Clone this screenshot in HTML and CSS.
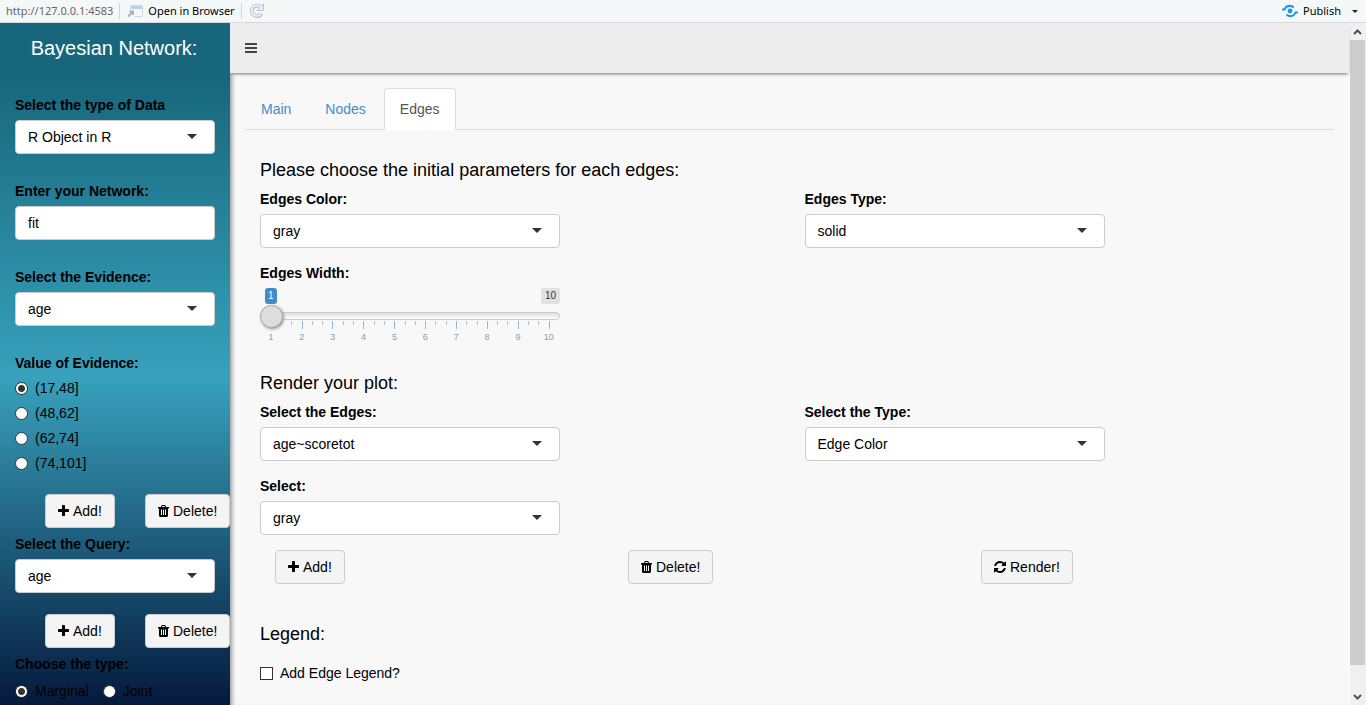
FILE: index.html
```html
<!DOCTYPE html>
<html lang="en">
<head>
<meta charset="utf-8">
<title>Bayesian Network</title>
<link rel="stylesheet" href="styles.css">
</head>
<body>
<svg class="sprite" aria-hidden="true">
  <symbol id="i-plus" viewBox="192 0 1408 1792"><path d="M1600 736v192q0 40-28 68t-68 28h-416v416q0 40-28 68t-68 28h-192q-40 0-68-28t-28-68v-416h-416q-40 0-68-28t-28-68v-192q0-40 28-68t68-28h416v-416q0-40 28-68t68-28h192q40 0 68 28t28 68v416h416q40 0 68 28t28 68z"/></symbol>
  <symbol id="i-trash" viewBox="0 0 11 14"><path fill-rule="evenodd" d="M3 3 3.500 1.500Q3.700 1 4.200 1H6.800Q7.300 1 7.500 1.500L8 3H11V4.500H10V11.600Q10 13 8.800 13H2.200Q1 13 1 11.600V4.500H0V3ZM4.100 3H6.900L6.600 2H4.400ZM3 5.500V11H4V5.500ZM5 5.500V11H6V5.500ZM7 5.500V11H8V5.500Z"/></symbol>
  <symbol id="i-refresh" viewBox="128 0 1536 1792"><path d="M1639 1056q0 5-1 7-64 268-268 434.500t-478 166.500q-146 0-282.500-55t-243.500-157l-129 129q-19 19-45 19t-45-19-19-45v-448q0-26 19-45t45-19h448q26 0 45 19t19 45-19 45l-137 137q71 66 161 102t187 36q134 0 250-65t186-179q11-17 53-117 8-23 30-23h192q13 0 22.500 9.500t9.500 22.500zm25-800v448q0 26-19 45t-45 19h-448q-26 0-45-19t-19-45 19-45l138-138q-148-137-349-137-134 0-250 65t-186 179q-11 17-53 117-8 23-30 23h-199q-13 0-22.500-9.500t-9.500-22.500v-7q65-268 270-434.500t480-166.500q146 0 284 55.500t245 156.500l130-129q19-19 45-19t45 19 19 45z"/></symbol>
</svg>

<div class="toolbar">
  <span class="url">http://127.0.0.1:4583</span>
  <span class="divider"></span>
  <button class="tool open" type="button">
    <svg width="16" height="14" viewBox="0 0 16 14" fill="none"><rect x="3.500" y="1.500" width="12" height="11" rx="1" fill="#f4f9fb" stroke="#c9d6df"/><path d="M4 2h11v3H4z" fill="#b9d7ec"/><path d="M0 6h8v8H0z" fill="#f4f8f9"/><path d="M1 12.500 5 8.500M2.500 7.500h3.500v3.500" stroke="#a9b2bb" stroke-width="2"/></svg>
    Open in Browser
  </button>
  <span class="divider"></span>
  <button class="tool reload" type="button" aria-label="Reload">
    <svg width="16" height="16" viewBox="0 0 16 16" fill="none"><path d="M12.500 10.500A5.200 5.200 0 1 1 11.500 4" stroke="#b9c4d2" stroke-width="4"/><path d="M14.500 1v6.500H8z" fill="#e9eff8" stroke="#b9c4d2"/><path d="M12.300 10.500A5.200 5.200 0 1 1 11.800 4.300" stroke="#e9eff8" stroke-width="2"/></svg>
  </button>
  <button class="tool publish" type="button">
    <svg width="16" height="14" viewBox="0 0 16 14" fill="none" stroke="#1a9be6" stroke-width="2"><circle cx="8" cy="7" r="2.400" fill="#1a9be6" stroke="none"/><path d="M0 5.500h2.500C3.500 3 6 1.500 9 2q1.500.3 2.700 1.400M16 8.500h-2.500C12.500 11 10 12.500 7 12q-1.500-.3-2.700-1.400"/></svg>
    Publish
    <span class="caret"></span>
  </button>
</div>

<div class="app">
  <aside class="sidebar">
    <h1 class="brand">Bayesian Network:</h1>
    <form class="side-form">
      <div class="field spaced">
        <label for="dtype">Select the type of Data</label>
        <span class="select"><select id="dtype"><option>R Object in R</option></select></span>
      </div>
      <div class="field spaced">
        <label for="net">Enter your Network:</label>
        <input class="text" id="net" type="text" value="fit">
      </div>
      <div class="field spaced">
        <label for="evidence">Select the Evidence:</label>
        <span class="select"><select id="evidence"><option>age</option></select></span>
      </div>
      <fieldset class="radios">
        <legend>Value of Evidence:</legend>
        <label class="choice"><input type="radio" name="value" checked>(17,48]</label>
        <label class="choice"><input type="radio" name="value">(48,62]</label>
        <label class="choice"><input type="radio" name="value">(62,74]</label>
        <label class="choice"><input type="radio" name="value">(74,101]</label>
      </fieldset>
      <div class="side-actions">
        <div><button class="btn" type="button"><svg class="ico"><use href="#i-plus"/></svg>Add!</button></div>
        <div><button class="btn" type="button"><svg class="ico"><use href="#i-trash"/></svg>Delete!</button></div>
      </div>
      <div class="field">
        <label for="query">Select the Query:</label>
        <span class="select"><select id="query"><option>age</option></select></span>
      </div>
      <div class="side-actions">
        <div><button class="btn" type="button"><svg class="ico"><use href="#i-plus"/></svg>Add!</button></div>
        <div><button class="btn" type="button"><svg class="ico"><use href="#i-trash"/></svg>Delete!</button></div>
      </div>
      <fieldset class="radios inline">
        <legend>Choose the type:</legend>
        <label class="choice"><input type="radio" name="type" checked>Marginal</label>
        <label class="choice"><input type="radio" name="type">Joint</label>
      </fieldset>
    </form>
  </aside>

  <div class="main">
    <header class="navbar">
      <button class="menu" type="button" aria-label="Toggle navigation"><span></span><span></span><span></span></button>
    </header>
    <main class="content">
      <nav class="tabs">
        <a href="#main">Main</a>
        <a href="#nodes">Nodes</a>
        <a href="#edges" class="active">Edges</a>
      </nav>

      <h4 class="first">Please choose the initial parameters for each edges:</h4>
      <div class="row">
        <div class="col">
          <div class="field">
            <label for="ecolor">Edges Color:</label>
            <span class="select"><select id="ecolor"><option>gray</option></select></span>
          </div>
          <div class="slider">
            <label for="ewidth">Edges Width:</label>
            <div class="bounds"><span class="current">1</span><span class="max">10</span></div>
            <input id="ewidth" type="range" min="1" max="10" value="1">
            <svg class="ticks" viewBox="0 0 300 9" aria-hidden="true">
              <path class="minor" d="M21.500 0v4M31.500 0v4M52.500 0v4M62.500 0v4M83.500 0v4M93.500 0v4M114.500 0v4M124.500 0v4M145.500 0v4M155.500 0v4M175.500 0v4M186.500 0v4M206.500 0v4M217.500 0v4M237.500 0v4M247.500 0v4M268.500 0v4M278.500 0v4"/>
              <path class="major" d="M11.500 0v8M42.500 0v8M72.500 0v8M103.500 0v8M134.500 0v8M165.500 0v8M196.500 0v8M227.500 0v8M258.500 0v8M289.500 0v8"/>
            </svg>
            <div class="scale"><span>1</span><span>2</span><span>3</span><span>4</span><span>5</span><span>6</span><span>7</span><span>8</span><span>9</span><span>10</span></div>
          </div>
        </div>
        <div class="col">
          <div class="field">
            <label for="etype">Edges Type:</label>
            <span class="select"><select id="etype"><option>solid</option></select></span>
          </div>
        </div>
      </div>

      <h4 class="render">Render your plot:</h4>
      <div class="row">
        <div class="col">
          <div class="field">
            <label for="edges-sel">Select the Edges:</label>
            <span class="select"><select id="edges-sel"><option>age~scoretot</option></select></span>
          </div>
          <div class="field">
            <label for="val">Select:</label>
            <span class="select"><select id="val"><option>gray</option></select></span>
          </div>
        </div>
        <div class="col">
          <div class="field">
            <label for="tsel">Select the Type:</label>
            <span class="select"><select id="tsel"><option>Edge Color</option></select></span>
          </div>
        </div>
      </div>
      <div class="actions">
        <div><button class="btn" type="button"><svg class="ico"><use href="#i-plus"/></svg>Add!</button></div>
        <div><button class="btn" type="button"><svg class="ico"><use href="#i-trash"/></svg>Delete!</button></div>
        <div><button class="btn" type="button"><svg class="ico wide"><use href="#i-refresh"/></svg>Render!</button></div>
      </div>

      <h4 class="legend">Legend:</h4>
      <label class="choice check"><input type="checkbox">Add Edge Legend?</label>
    </main>
  </div>

  <div class="scrollbar" aria-hidden="true">
    <svg width="9" height="6" viewBox="0 0 9 6"><path d="M1 5 4.500 1.500 8 5" fill="none" stroke="#505050" stroke-width="2"/></svg>
    <span class="thumb"></span>
    <svg width="9" height="6" viewBox="0 0 9 6"><path d="M1 1 4.500 4.500 8 1" fill="none" stroke="#505050" stroke-width="2"/></svg>
  </div>
</div>
</body>
</html>
```
FILE: styles.css
```css
* { box-sizing: border-box; }

body {
  margin: 0;
  min-height: 100vh;
  display: flex;
  flex-direction: column;
  font: 14px/20px "Liberation Sans", Arial, sans-serif;
  color: #000;
  background: #f8f8f8;
}

button, input, select { font: inherit; color: inherit; margin: 0; }
.sprite { display: none; }

/* Viewer toolbar */
.toolbar {
  display: flex;
  align-items: center;
  height: 23px;
  padding: 0 8px 0 6px;
  background: #f4f8f9;
  border-bottom: 1px solid #d6dadc;
  font: 11px/20px "Noto Sans", sans-serif;
}
.url { color: #666; }
.divider { width: 1px; height: 16px; margin: 0 7px 0 6px; background: #cfd4d8; }
.tool {
  display: flex;
  align-items: center;
  gap: 5px;
  padding: 0;
  border: 0;
  background: none;
}
.publish { margin-left: auto; }
.caret {
  margin-left: 6px;
  border: 3px solid transparent;
  border-top-color: #222;
  border-bottom: 0;
}

.app { flex: 1; display: flex; }

/* Sidebar */
.sidebar {
  flex: 0 0 230px;
  min-width: 0;
  position: relative;
  z-index: 1;
  background: linear-gradient(#17667b 0, #17667b 50px, #38a1bc 52%, #041a3d 100%);
}
.brand {
  margin: 0;
  padding-right: 2px;
  font-size: 20px;
  font-weight: 400;
  line-height: 50px;
  text-align: center;
  color: #fff;
}
.side-form { padding: 22px 15px 0; }
.spaced { margin-bottom: 27px; }

.field { display: flex; flex-direction: column; gap: 5px; }
.field > label, .radios legend, .slider > label { font-weight: 700; }

.select { position: relative; display: block; }
.select::after {
  content: "";
  position: absolute;
  right: 18px;
  top: 14px;
  border: 5px solid transparent;
  border-top-color: #333;
  border-bottom: 0;
  pointer-events: none;
}
.select select, .text {
  appearance: none;
  display: block;
  width: 100%;
  height: 34px;
  padding: 0 12px;
  border: 1px solid #ccc;
  border-radius: 4px;
  background: #fff;
}

.radios {
  display: flex;
  flex-direction: column;
  gap: 5px;
  margin: 0;
  padding: 0;
  border: 0;
}
.radios legend { padding: 0; margin-bottom: 5px; }
.inline { flex-direction: row; gap: 14px; }
.inline legend { margin-bottom: 7px; }

.choice { display: flex; align-items: center; gap: 7px; }
.choice input {
  appearance: none;
  width: 13px;
  height: 13px;
  border: 1px solid #333;
  background: #fff;
}
.choice input[type="radio"] { border-radius: 50%; }
.choice input[type="radio"]:checked { background: radial-gradient(#333 3px, #fff 4px); }

.side-actions { display: flex; margin: 21px 0 6px 15px; }
.side-actions div { flex: 0 0 100px; min-width: 0; padding-left: 15px; }

.btn {
  display: inline-flex;
  align-items: center;
  gap: 4px;
  height: 34px;
  padding: 0 12px;
  border: 1px solid #ccc;
  border-radius: 4px;
  background: #f4f4f4;
  white-space: nowrap;
}
.ico { width: 11px; height: 14px; }
.ico.wide { width: 12px; }

/* Main area */
.main { flex: 1; display: flex; flex-direction: column; min-width: 0; }
.navbar {
  position: relative;
  display: flex;
  align-items: center;
  height: 50px;
  padding-left: 15px;
  background: #ededed;
  box-shadow: 0 2px 3px -1px #777;
}
.menu {
  display: flex;
  flex-direction: column;
  gap: 2px;
  width: 12px;
  padding: 0;
  border: 0;
  background: none;
}
.menu span { height: 2px; background: #444; }

.content {
  flex: 1;
  padding: 15px 15px 20px;
  box-shadow: inset 5px 0 4px -3px #999;
}
.tabs { display: flex; gap: 2px; border-bottom: 1px solid #ddd; }
.tabs a {
  margin-bottom: -1px;
  padding: 10px 15px;
  border: 1px solid transparent;
  border-radius: 4px 4px 0 0;
  color: #428bca;
  text-decoration: none;
}
.tabs .active {
  background: #fff;
  border-color: #ddd;
  border-bottom-color: #fff;
  color: #555;
}

h4 { margin: 0 15px 9px; font-size: 18px; font-weight: 400; line-height: 20px; }
.first { margin-top: 30px; }
.render { margin-top: 28px; }
.legend { margin-top: 40px; margin-bottom: 19px; }

.row { display: grid; grid-template-columns: 1fr 1fr; }
.col {
  display: flex;
  flex-direction: column;
  gap: 15px;
  align-items: flex-start;
  padding: 0 15px;
}
.col .field, .slider { width: 300px; max-width: 100%; }

.slider label, .slider input, .ticks { display: block; }
.bounds {
  display: flex;
  justify-content: space-between;
  margin: 5px 0 0 5px;
  font-size: 10px;
  line-height: 16px;
}
.bounds span { padding: 0 4px; border-radius: 3px; background: #e1e1e1; color: #333; }
.bounds .current { padding: 0 3px; background: #428bca; color: #fff; }
.slider input {
  appearance: none;
  position: relative;
  width: 100%;
  height: 24px;
  margin-bottom: -7px;
  background: none;
}
.slider input::-webkit-slider-runnable-track {
  height: 8px;
  border: 1px solid #ccc;
  border-radius: 8px;
  background: linear-gradient(#ddd, #fff);
}
.slider input::-webkit-slider-thumb {
  appearance: none;
  position: relative;
  left: -1px;
  width: 23px;
  height: 23px;
  margin-top: -8px;
  border: 1px solid #aaa;
  border-radius: 50%;
  background: #ddd;
  box-shadow: 1px 1px 3px #999;
}
.ticks { width: 300px; height: 9px; fill: none; }
.minor { stroke: #bbb; }
.major { stroke: #8fbbdf; }
.scale { display: flex; justify-content: space-between; padding: 0 1px; font-size: 9px; line-height: 15px; color: #999; }
.scale span { width: 20px; text-align: center; }

.actions { display: grid; grid-template-columns: repeat(3, 1fr); margin: 15px 15px 0; }
.actions div { padding: 0 15px; }
.check { margin: 0 15px; }

/* Page scrollbar */
.scrollbar {
  flex: 0 0 17px;
  display: flex;
  flex-direction: column;
  align-items: center;
  gap: 5px;
  padding: 6px 1px 5px 0;
  border-left: 1px solid #fff;
  background: #f0f0f0;
}
.thumb { flex: 1; width: 15px; margin-bottom: 24px; background: #cdcdcd; }
```
